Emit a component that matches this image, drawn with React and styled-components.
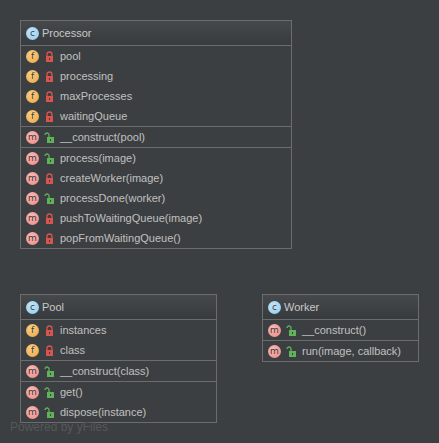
import React from "react";
import styled, { createGlobalStyle } from "styled-components";

const G = createGlobalStyle`
  html, body { margin:0; background:#3c3f41; }
  body { width:439px; height:443px; overflow:hidden; font-family:"Liberation Sans",Arial,sans-serif; }
`;
const Canvas = styled.div`position:relative;width:439px;height:443px;background:#3c3f41;`;
const Box = styled.div`
  position:absolute; left:${p=>p.x}px; top:${p=>p.y}px; width:${p=>p.w}px;
  border:1px solid #6c6c6c; background:#3c3f41; box-sizing:border-box;
  display:flex; flex-direction:column;
`;
const Header = styled.div`
  height:24px; display:flex; align-items:center; gap:3px; padding-left:5px;
  background:linear-gradient(#46494b,#383b3d); border-bottom:1px solid #6c6c6c;
  color:#c8c8c8; font-size:11px;
`;
const Section = styled.div`
  display:flex; flex-direction:column;
  border-top:${p=>p.first?"none":"1px solid #6c6c6c"};
`;
const Row = styled.div`
  height:20px; display:flex; align-items:center; padding-left:5px; color:#c0c0c0; font-size:11px;
`;
const Badge = styled.span`
  width:13px; height:13px; border-radius:50%; flex:none;
  background:radial-gradient(circle at 40% 35%, ${p=>p.light}, ${p=>p.c});
  color:#3b3b3b; font-size:9px; display:flex; align-items:center; justify-content:center;
  font-family:"DejaVu Sans",sans-serif;
`;
const Name = styled.span`margin-left:5px;`;
const Footer = styled.div`
  position:absolute; left:10px; top:420px; color:#55585a; font-size:12px;
`;

const colors = { c:["#8ecbf0","#c4e4f8"], f:["#eea43c","#f8cf8a"], m:["#ee8580","#f8bcb8"] };
const B = ({k}) => <Badge c={colors[k][0]} light={colors[k][1]}>{k}</Badge>;
const Lock = ({open}) => (
  <svg width="11" height="11" viewBox="0 0 11 11" style={{marginLeft:5,flex:"none"}}>
    {open
      ? <path d="M5 5V3a2 2 0 0 0-4 0" fill="none" stroke="#5fb15a" strokeWidth="1.3"/>
      : <path d="M3 5V3.5a2.5 2.5 0 0 1 5 0V5" fill="none" stroke="#d9534f" strokeWidth="1.3"/>}
    <rect x={open?3:2} y="5" width="7" height="6" fill={open?"#5fb15a":"#d9534f"}/>
    <rect x={open?6:5} y="7" width="1" height="2" fill="#3c3f41"/>
  </svg>
);

const Cls = ({x,y,w,name,sections}) => (
  <Box x={x} y={y} w={w}>
    <Header><B k="c"/>{name}</Header>
    {sections.map((s,i)=>(
      <Section key={i} first={i===0}>
        {s.map(([k,open,t])=>(
          <Row key={t}><B k={k}/><Lock open={open}/><Name>{t}</Name></Row>
        ))}
      </Section>
    ))}
  </Box>
);

export default function App(){
  return <Canvas><G/>
    <Cls x={20} y={20} w={272} name="Processor" sections={[
      [["f",0,"pool"],["f",0,"processing"],["f",0,"maxProcesses"],["f",0,"waitingQueue"]],
      [["m",1,"__construct(pool)"]],
      [["m",1,"process(image)"],["m",0,"createWorker(image)"],["m",1,"processDone(worker)"],["m",0,"pushToWaitingQueue(image)"],["m",0,"popFromWaitingQueue()"]],
    ]}/>
    <Cls x={20} y={294} w={197} name="Pool" sections={[
      [["f",0,"instances"],["f",0,"class"]],
      [["m",1,"__construct(class)"]],
      [["m",1,"get()"],["m",1,"dispose(instance)"]],
    ]}/>
    <Cls x={262} y={294} w={157} name="Worker" sections={[
      [["m",1,"__construct()"]],
      [["m",1,"run(image, callback)"]],
    ]}/>
    <Footer>Powered by yFiles</Footer>
  </Canvas>;
}
